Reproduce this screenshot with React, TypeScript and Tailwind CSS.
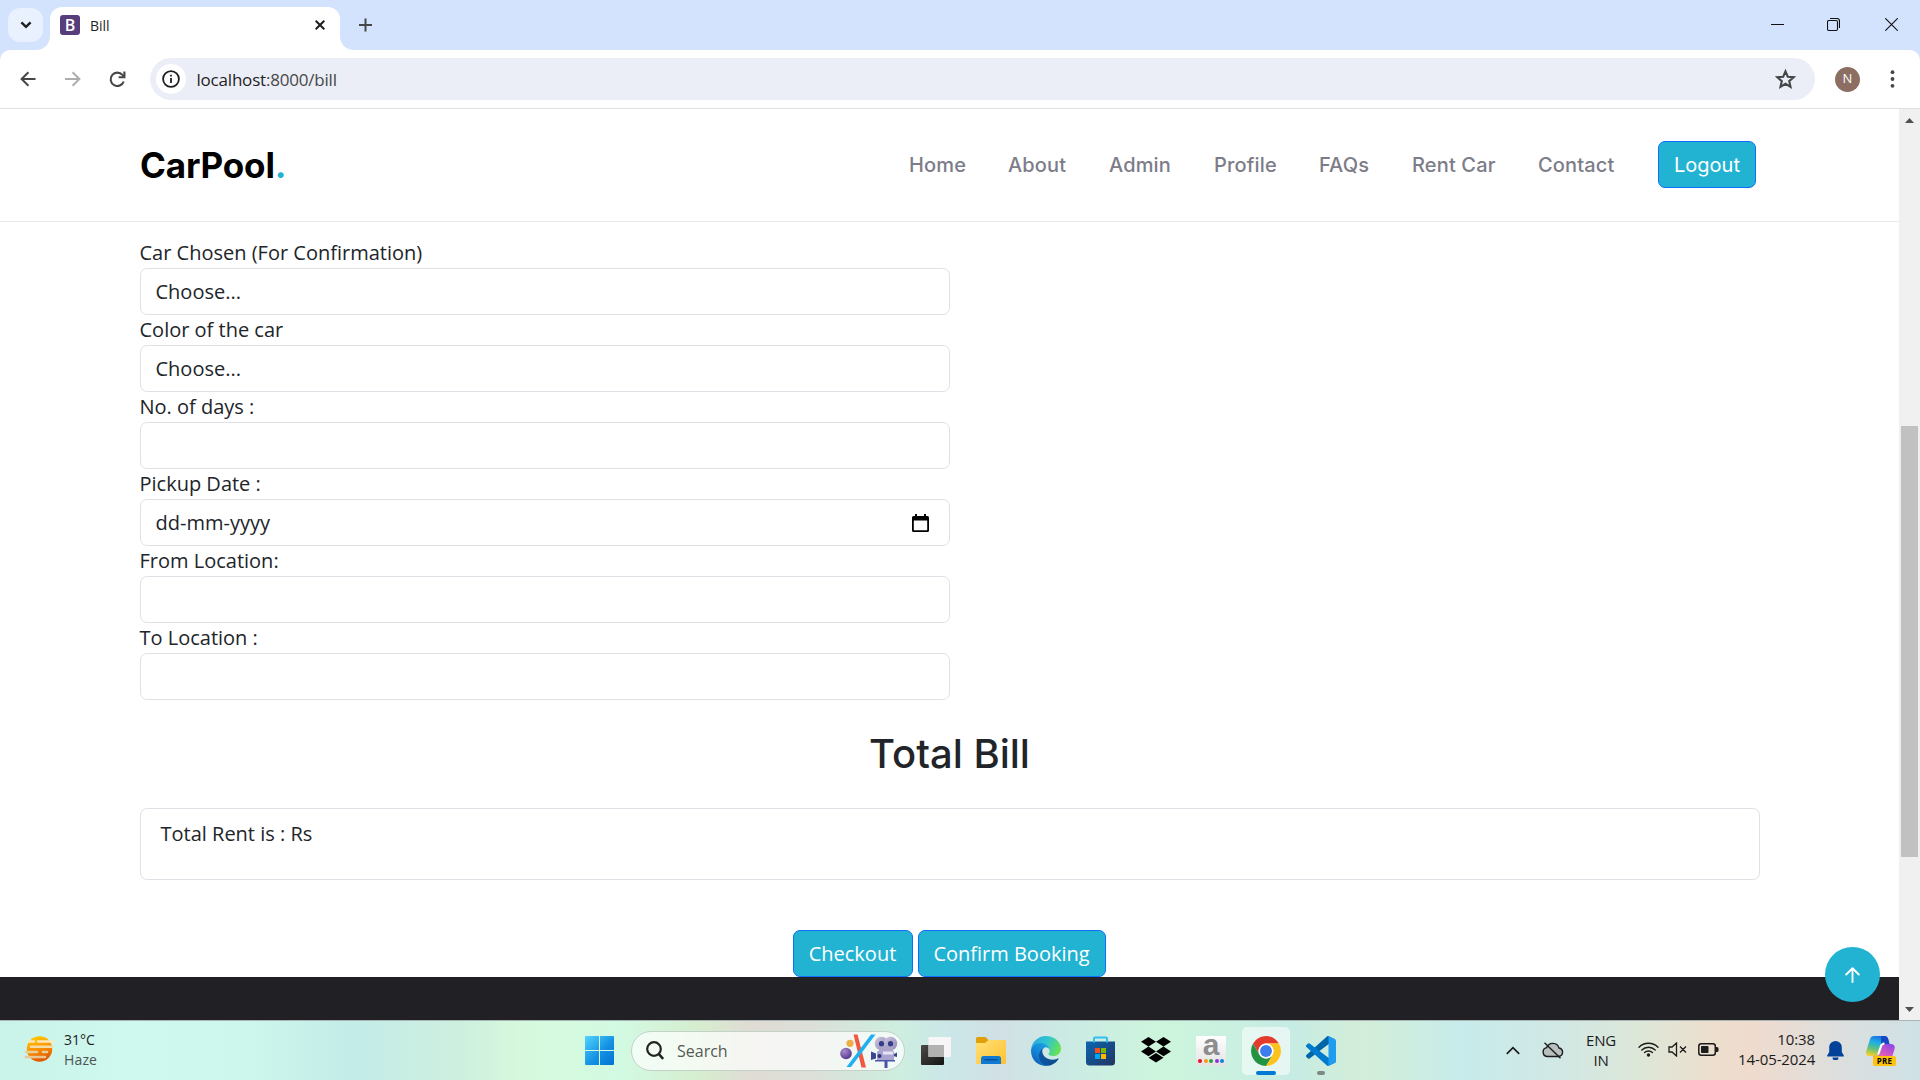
import React from "react";

const NAV: { label: string; width: string }[] = [
  { label: "Home", width: "w-[56px]" },
  { label: "About", width: "w-[58px]" },
  { label: "Admin", width: "w-[62px]" },
  { label: "Profile", width: "w-[62px]" },
  { label: "FAQs", width: "w-[50px]" },
  { label: "Rent Car", width: "w-[83px]" },
  { label: "Contact", width: "w-[77px]" },
];

const FIELDS: { label: string; value?: string; date?: boolean }[] = [
  { label: "Car Chosen (For Confirmation)", value: "Choose..." },
  { label: "Color of the car", value: "Choose..." },
  { label: "No. of days :" },
  { label: "Pickup Date :", value: "dd-mm-yyyy", date: true },
  { label: "From Location:" },
  { label: "To Location :" },
];

function TitleBar() {
  return (
    <div className="flex h-[50px] shrink-0 bg-[#d3e3fd] pl-2">
      <div className="mt-2 flex h-[34px] w-[35px] items-center justify-center rounded-[12px] bg-[#e9f0fe]">
        <svg width="12" height="8" viewBox="0 0 12 8" fill="none" stroke="#1f1f1f" strokeWidth="2.4">
          <path d="M1.4 1.3 6 5.9l4.6-4.6" />
        </svg>
      </div>
      <div className="relative ml-[7px] mt-[7px] flex h-[43px] w-[290px] items-center rounded-t-[12px] bg-white pb-[7px] pl-[10px] pr-[15px]">
        <svg className="absolute -left-[14px] bottom-0" width="14" height="14">
          <path d="M14 0v14H0C8 14 14 8 14 0z" fill="#fff" />
        </svg>
        <svg className="absolute -right-[14px] bottom-0" width="14" height="14">
          <path d="M0 0v14h14C6 14 0 8 0 0z" fill="#fff" />
        </svg>
        <div className="flex h-5 w-5 items-center justify-center rounded-[3px] bg-[#563d7c] text-[16px] font-semibold leading-none text-white">
          B
        </div>
        <span className="ml-[10px] mt-[1px] text-[14px] text-[#1f1f1f]">Bill</span>
        <svg className="ml-auto" width="10" height="10" viewBox="0 0 10 10" stroke="#1f1f1f" strokeWidth="2">
          <path d="M.7.7l8.600 8.600M9.300.7.7 9.300" />
        </svg>
      </div>
      <svg className="ml-[19px] mt-[18px]" width="13" height="14" viewBox="0 0 13 14" stroke="#444746" strokeWidth="2">
        <path d="M6.500 .5v13M0 7h13" />
      </svg>
      <div className="ml-auto flex items-start pr-[22px] pt-[18px]">
        <svg width="13" height="13" stroke="#111" strokeWidth="1">
          <path d="M0 6.500h13" />
        </svg>
        <svg className="ml-[43px]" width="13" height="13" viewBox="0 0 13 13" fill="none" stroke="#111" strokeWidth="1.100">
          <rect x=".5" y="2.500" width="10" height="10" rx="1.500" />
          <path d="M3 .5h7a2.500 2.500 0 0 1 2.500 2.500v7" />
        </svg>
        <svg className="ml-[45px]" width="13" height="13" viewBox="0 0 13 13" stroke="#111" strokeWidth="1.100">
          <path d="M.3.3l12.400 12.400M12.700.3.3 12.700" />
        </svg>
      </div>
    </div>
  );
}

function Toolbar() {
  return (
    <div className="bg-[#d3e3fd]">
      <div className="flex h-[59px] items-center rounded-t-[10px] border-b border-[#dfdfdf] bg-white pl-5">
        <svg width="16" height="16" viewBox="0 0 16 16" fill="none" stroke="#444746" strokeWidth="2">
          <path d="M15.500 8H2M8.400 1.200 1.600 8l6.800 6.800" />
        </svg>
        <svg className="ml-[29px]" width="16" height="16" viewBox="0 0 16 16" fill="none" stroke="#adadad" strokeWidth="2">
          <path d="M0 8h13.500M7.600 1.200 14.400 8l-6.800 6.800" />
        </svg>
        <svg className="ml-[28px]" width="17" height="17" viewBox="0 0 17 17" fill="none" stroke="#444746" strokeWidth="2.100">
          <path d="M14.700 10.500A6.700 6.700 0 1 1 13.400 3.900L15 5.500" />
          <path d="M15.400 .5v5.700H9.600" />
        </svg>
        <div className="ml-[24px] flex h-[42px] w-[1665px] items-center rounded-full bg-[#ebeef7] pl-[6px] pr-[19px]">
          <div className="flex h-[30px] w-[30px] items-center justify-center rounded-full bg-white">
            <svg width="18" height="18" viewBox="0 0 18 18" fill="none" stroke="#1f1f1f" strokeWidth="1.800">
              <circle cx="9" cy="9" r="7.900" />
              <path d="M9 8v5M9 4.700v1.900" />
            </svg>
          </div>
          <span className="ml-[10.500px] text-[17px] leading-none tracking-[-0.2px] text-[#1f1f1f]">
            localhost<span className="text-[#474747]">:8000/bill</span>
          </span>
          <svg className="ml-auto" width="21" height="20" viewBox="0 0 21 20" fill="none" stroke="#444746" strokeWidth="2.100">
            <path d="M10.500 2.300l2.300 5.400 5.800.5-4.400 3.900 1.300 5.700-5-3-5 3 1.300-5.700L2.400 8.200l5.800-.5z" />
          </svg>
        </div>
        <div className="ml-5 flex h-[25px] w-[25px] items-center justify-center rounded-full bg-[#8d6e63] text-[13px] text-white">
          N
        </div>
        <svg className="ml-[30px]" width="5" height="18" fill="#444746">
          <circle cx="2.500" cy="2.200" r="1.900" />
          <circle cx="2.500" cy="9" r="1.900" />
          <circle cx="2.500" cy="15.800" r="1.900" />
        </svg>
      </div>
    </div>
  );
}

function SiteHeader() {
  return (
    <header className="flex h-[113px] shrink-0 items-center border-b border-[#ebebee] pl-[140px] pr-[143px] font-['Inter'] text-[20px]">
      <div className="text-[35px] font-bold leading-none tracking-[-0.15px] text-black">
        CarPool<span className="text-[#22b3d2]">.</span>
      </div>
      <nav className="-mt-[2px] ml-auto flex items-center gap-[43px] font-medium text-[#7d7c89]">
        {NAV.map((n) => (
          <a key={n.label} className={`${n.width} mt-px whitespace-nowrap tracking-[0.15px]`}>
            {n.label}
          </a>
        ))}
        <button className="h-[47px] w-[98px] rounded-[7px] border border-[#0d6efd] bg-[#22b3d2] pt-[2px] font-normal text-white">
          Logout
        </button>
      </nav>
    </header>
  );
}

function CalendarIcon() {
  return (
    <svg className="mt-[1px]" width="17" height="19" viewBox="0 0 17 19">
      <path
        fillRule="evenodd"
        d="M3 0h2v2h7V0h2v2h1.500A1.500 1.500 0 0 1 17 3.500v13a1.500 1.500 0 0 1-1.500 1.500h-14A1.500 1.500 0 0 1 0 16.500v-13A1.500 1.500 0 0 1 1.500 2H3zM1.800 6.500v9.700h13.400V6.500z"
        fill="#000"
      />
    </svg>
  );
}

function Scrollbar() {
  return (
    <div className="flex w-[21px] flex-col items-center bg-[#f0f0f0]">
      <svg className="mt-[9px]" width="9" height="5">
        <path d="M4.500 0 9 5H0z" fill="#505050" />
      </svg>
      <div className="mt-[303px] h-[431px] w-[17px] bg-[#c1c1c1]" />
      <svg className="mt-[150px]" width="9" height="5">
        <path d="M4.500 5 9 0H0z" fill="#505050" />
      </svg>
    </div>
  );
}

function Page() {
  return (
    <div className="relative flex h-[911px] shrink-0 bg-white">
      <div className="flex min-w-0 flex-1 flex-col text-[20px] text-[#212529]">
        <SiteHeader />
        <main className="flex h-[755px] flex-col pl-[140px] pr-[139px] pt-4">
          <form className="w-[810px]">
            {FIELDS.map((f) => (
              <div key={f.label}>
                <label className="-ml-[0.5px] block h-[30px] leading-[30px]">{f.label}</label>
                <div className="flex h-[47px] items-center justify-between rounded-[7px] border border-[#dee2e6] pl-[14.500px] pr-5">
                  <span>{f.value}</span>
                  {f.date && <CalendarIcon />}
                </div>
              </div>
            ))}
          </form>
          <h2 className="mt-[30px] h-12 pr-px text-center font-['Inter'] text-[40px] font-medium leading-[48px]">Total Bill</h2>
          <section className="mt-[30px] h-[72px] rounded-[7px] border border-[#dee2e6] pl-[19.500px] pt-[10px] leading-[30px]">
            Total Rent is : Rs
          </section>
          <div className="mt-[50px] flex justify-center gap-[5px] pr-[2px] text-white">
            <button className="h-[47px] w-[120px] rounded-[7px] border border-[#0d6efd] bg-[#22b3d2]">Checkout</button>
            <button className="h-[47px] w-[188px] rounded-[7px] border border-[#0d6efd] bg-[#22b3d2]">
              Confirm Booking
            </button>
          </div>
        </main>
        <footer className="h-[43px] bg-[#212025]" />
      </div>
      <Scrollbar />
      <div className="absolute bottom-[18px] right-10 flex h-[55px] w-[55px] items-center justify-center rounded-full bg-[#22b3d2]">
        <svg className="mt-[1px]" width="15" height="16" viewBox="0 0 15 16" fill="none" stroke="#fff" strokeWidth="1.900" strokeLinecap="round" strokeLinejoin="round">
          <path d="M7.500 15V1.500M1.200 7.500l6.300-6.200 6.300 6.200" />
        </svg>
      </div>
    </div>
  );
}

function HazeIcon() {
  return (
    <svg className="-ml-px -mt-[2px]" width="31" height="28" viewBox="0 0 31 28">
      <defs>
        <linearGradient id="sun" x1="0" y1="0" x2=".3" y2="1">
          <stop offset="0" stopColor="#ffd400" />
          <stop offset=".5" stopColor="#ff9a00" />
          <stop offset="1" stopColor="#e25a00" />
        </linearGradient>
      </defs>
      <circle cx="15.500" cy="13" r="12.700" fill="url(#sun)" />
      <g strokeLinecap="round" strokeWidth="2.600">
        <path d="M5 5.500h5M14 5.500h15" stroke="#fbe9bd" />
        <path d="M7 10.800h21" stroke="#f4dca8" />
        <path d="M2 16h11M19 16h4" stroke="#e8cf9a" />
        <path d="M2 21h19" stroke="#e9c795" />
      </g>
    </svg>
  );
}

function WindowsIcon() {
  return (
    <svg width="29" height="29" viewBox="0 0 29 29">
      <defs>
        <linearGradient id="win" x1="0" y1="0" x2="1" y2="1">
          <stop offset="0" stopColor="#52d5ff" />
          <stop offset=".55" stopColor="#1592e3" />
          <stop offset="1" stopColor="#0072d3" />
        </linearGradient>
      </defs>
      <path
        fill="url(#win)"
        d="M1 0h13v14H0V1a1 1 0 0 1 1-1zM15 0h13a1 1 0 0 1 1 1v13H15zM0 15h14v14H1a1 1 0 0 1-1-1zM15 15h14v13a1 1 0 0 1-1 1H15z"
      />
    </svg>
  );
}

function SearchArt() {
  return (
    <svg width="58" height="34" viewBox="0 0 58 34">
      <defs>
        <radialGradient id="ball" cx=".35" cy=".3" r=".8">
          <stop offset="0" stopColor="#a98bd0" />
          <stop offset="1" stopColor="#4d2f86" />
        </radialGradient>
        <linearGradient id="cam" x1="0" y1="0" x2="1" y2="1">
          <stop offset="0" stopColor="#cfc6da" />
          <stop offset="1" stopColor="#8f88bd" />
        </linearGradient>
      </defs>
      <circle cx="6" cy="19.500" r="5.800" fill="url(#ball)" />
      <circle cx="10" cy="9.300" r="3.600" fill="#f0ad45" />
      <path d="M13.500.5h4L26 33.500h-4.500z" fill="#f0583f" />
      <path d="M31 .5h4.500L11 33H6.500z" fill="#1fb0f2" />
      <path d="M31 17.500l5 2v5l-5 1.500z" fill="#3d458f" />
      <path d="M53 20.500l4-2v4.500l-4-1z" fill="#3d458f" />
      <circle cx="41.500" cy="9.500" r="6.800" fill="url(#cam)" />
      <circle cx="50.500" cy="9.500" r="6.800" fill="url(#cam)" />
      <path d="M39 12h14v5H39z" fill="#aba3c8" />
      <circle cx="41.500" cy="9.700" r="2.600" fill="#343d87" />
      <circle cx="50.500" cy="9.700" r="2.600" fill="#343d87" />
      <rect x="37" y="17" width="17" height="9.500" rx="1" fill="#a9a3d0" />
      <path d="M35 26h20v1.500H35zM44.500 27.500h3V34h-3z" fill="#4a55a8" />
      <circle cx="39.500" cy="22" r="2" fill="#2b3275" />
      <path d="M43 17.500h10v3H43z" fill="#e6e3f4" />
    </svg>
  );
}

function TaskViewIcon() {
  return (
    <svg width="30" height="28" viewBox="0 0 30 28">
      <defs>
        <linearGradient id="tv" x1="0" y1="0" x2="1" y2="1">
          <stop offset="0" stopColor="#4a4a48" />
          <stop offset="1" stopColor="#141414" />
        </linearGradient>
      </defs>
      <rect x="0" y="8" width="23" height="20" rx="1" fill="url(#tv)" />
      <rect x="7.500" y="0" width="22.500" height="20" rx="1" fill="#f6f6f6" />
      <rect x="7.500" y="8" width="15.500" height="12" fill="#b2b2b0" />
    </svg>
  );
}

function FolderIcon() {
  return (
    <svg width="30" height="27" viewBox="0 0 30 27">
      <defs>
        <linearGradient id="fold" x1="0" y1="0" x2="1" y2="1">
          <stop offset="0" stopColor="#ffe07a" />
          <stop offset="1" stopColor="#ffc12e" />
        </linearGradient>
      </defs>
      <path d="M0 1.500A1.500 1.500 0 0 1 1.500 0h8l3 3H28a2 2 0 0 1 2 2v4H0z" fill="#dfa00c" />
      <path d="M0 6h9l3.500-3H29a1 1 0 0 1 1 1v22a1 1 0 0 1-1 1H1a1 1 0 0 1-1-1z" fill="url(#fold)" />
      <path d="M5 27v-5.500A2.500 2.500 0 0 1 7.500 19h15a2.500 2.500 0 0 1 2.500 2.500V27z" fill="#1079d2" />
      <path d="M9 22.800h12" stroke="#0b4f96" strokeWidth="1.500" strokeLinecap="round" />
    </svg>
  );
}

function EdgeIcon() {
  return (
    <svg width="30" height="30" viewBox="0 0 256 256">
      <defs>
        <linearGradient id="e1" x1="0" y1=".5" x2="1" y2=".6">
          <stop offset="0" stopColor="#0c59a4" />
          <stop offset="1" stopColor="#114a8b" />
        </linearGradient>
        <linearGradient id="e2" x1=".8" y1=".2" x2=".3" y2="1">
          <stop offset="0" stopColor="#1b9de2" />
          <stop offset=".5" stopColor="#1284d4" />
          <stop offset="1" stopColor="#0d5fb5" />
        </linearGradient>
        <linearGradient id="e3" x1="0" y1=".3" x2="1" y2=".6">
          <stop offset="0" stopColor="#2aa9e0" />
          <stop offset=".5" stopColor="#30c6ce" />
          <stop offset="1" stopColor="#6ce34d" />
        </linearGradient>
      </defs>
      <path
        fill="url(#e1)"
        d="M231 190.500a94 94 0 0 1-10.500 4.700 102 102 0 0 1-36 6.500c-47.400 0-88.700-32.600-88.700-74.500a31.600 31.600 0 0 1 16.400-27.300c-42.900 1.800-53.900 46.500-53.900 72.700 0 74 68.200 81.500 82.900 81.500 7.900 0 19.800-2.300 27-4.600l1.300-.4A128.300 128.300 0 0 0 236 194a4 4 0 0 0-5-3.500z"
      />
      <path
        fill="url(#e2)"
        d="M105.700 241.400a79 79 0 0 1-22.700-21.300 80.700 80.700 0 0 1 29.500-120c3.200-1.500 8.500-4.100 15.600-4a32.400 32.400 0 0 1 25.700 13 31.900 31.900 0 0 1 6.300 18.700c0-.2 24.500-79.600-80-79.600-43.900 0-80 41.700-80 78.200a130.200 130.200 0 0 0 12.100 56 128 128 0 0 0 156.400 67 75.500 75.500 0 0 1-62.800-8z"
      />
      <path
        fill="url(#e3)"
        d="M152.300 148.900c-.8 1-3.300 2.500-3.300 5.700 0 2.600 1.700 5.100 4.700 7.200 14.400 10 41.500 8.700 41.600 8.700a59.600 59.600 0 0 0 30.300-8.400 61.400 61.400 0 0 0 30.400-52.900c.3-22.400-8-37.300-11.300-43.900C223.500 23.900 177.700 0 128 0A128 128 0 0 0 0 126.200c.5-36.500 36.800-66 80-66 3.500 0 23.500.3 42 10a72.600 72.600 0 0 1 30.900 29.300c6.100 10.600 7.200 24.100 7.200 29.500s-2.700 13.300-7.800 19.900z"
      />
    </svg>
  );
}

function StoreIcon() {
  return (
    <svg width="30" height="30" viewBox="0 0 30 30">
      <defs>
        <linearGradient id="store" x1="0" y1="0" x2="1" y2="1">
          <stop offset="0" stopColor="#0a66b4" />
          <stop offset="1" stopColor="#22345e" />
        </linearGradient>
      </defs>
      <path d="M0 5.500h29V26a3.500 3.500 0 0 1-3.500 3.500h-22A3.500 3.500 0 0 1 0 26z" fill="url(#store)" />
      <path d="M8 6.500V2.500A1 1 0 0 1 9 1.500h11a1 1 0 0 1 1 1v4" fill="none" stroke="#32bdf1" strokeWidth="2" />
      <path d="M9 12h5v5H9z" fill="#f25022" />
      <path d="M15 12h5v5h-5z" fill="#7fba00" />
      <path d="M9 18h5v5H9z" fill="#00a4ef" />
      <path d="M15 18h5v5h-5z" fill="#ffb900" />
    </svg>
  );
}

function DropboxIcon() {
  return (
    <svg width="30" height="26" viewBox="0 0 30 26">
      <path d="M7.500 0 15 4.800 7.500 9.600 0 4.800zM22.500 0 30 4.800l-7.500 4.800L15 4.800zM0 14.400l7.500-4.800 7.500 4.800-7.500 4.800zM22.500 9.600l7.500 4.800-7.500 4.800-7.500-4.800zM7.500 20.800 15 16l7.500 4.800-7.500 4.800z" />
    </svg>
  );
}

function AmazonIcon() {
  return (
    <div className="flex h-[30px] w-[30px] flex-col items-center justify-between bg-gradient-to-b from-white to-[#e2e2e2] pb-[3px]">
      <span className="h-5 font-['Liberation_Sans'] text-[30px] font-bold leading-[17px] text-[#8d8d8d]">a</span>
      <div className="flex gap-[1.500px]">
        <i className="h-1 w-1 rounded-full bg-[#e5102d]" />
        <i className="h-1 w-1 rounded-full bg-[#f59b0b]" />
        <i className="h-1 w-1 rounded-full bg-[#2f9e44]" />
        <i className="h-1 w-1 rounded-full bg-[#8c35d8]" />
        <i className="h-1 w-1 rounded-full bg-[#0b84dc]" />
      </div>
    </div>
  );
}

function ChromeIcon() {
  return (
    <svg width="30" height="30" viewBox="0 0 48 48">
      <circle cx="24" cy="24" r="24" fill="#fff" />
      <path d="M3.220 12a24 24 0 0 1 41.560 0H24a12 12 0 0 0-10.390 18z" fill="#e33b2e" />
      <path d="M44.780 12A24 24 0 0 1 24 48l10.390-18A12 12 0 0 0 24 12z" fill="#fcc31e" />
      <path d="M24 48A24 24 0 0 1 3.220 12l10.390 18A12 12 0 0 0 34.390 30z" fill="#229342" />
      <circle cx="24" cy="24" r="12" fill="#fff" />
      <circle cx="24" cy="24" r="9.500" fill="#3b7ded" />
    </svg>
  );
}

function VsCodeIcon() {
  return (
    <svg width="30" height="30" viewBox="0 0 100 100">
      <path d="M96.500 10.800 75.900.9a6.200 6.200 0 0 0-7.100 1.200L1.300 63.600a4.200 4.200 0 0 0 0 6.200l5.500 5a4.200 4.200 0 0 0 5.300.2l81.200-61.600c2.700-2 6.700-.1 6.700 3.300v-.2a6.200 6.200 0 0 0-3.500-5.700z" fill="#0065a9" />
      <path d="M96.500 89.200 75.900 99.100a6.200 6.200 0 0 1-7.100-1.200L1.300 36.400a4.200 4.200 0 0 1 0-6.200l5.500-5a4.200 4.200 0 0 1 5.300-.2l81.200 61.600c2.700 2 6.700.1 6.700-3.300v.2a6.200 6.200 0 0 1-3.500 5.700z" fill="#007acc" />
      <path d="M75.900 99.100a6.200 6.200 0 0 1-7.100-1.200c2.300 2.300 6.200.7 6.200-2.600V4.700c0-3.300-3.900-4.900-6.200-2.600A6.200 6.200 0 0 1 75.900.9l20.600 9.900a6.200 6.200 0 0 1 3.500 5.700v67a6.200 6.200 0 0 1-3.500 5.700z" fill="#1f9cf0" />
    </svg>
  );
}

function CopilotIcon() {
  return (
    <div className="relative h-[29px] w-[30px]">
      <svg width="29" height="27" viewBox="0 0 29 27">
        <defs>
          <linearGradient id="c1" x1=".6" y1="0" x2=".3" y2="1">
            <stop offset="0" stopColor="#1b6fe0" />
            <stop offset=".35" stopColor="#1cb0e6" />
            <stop offset=".65" stopColor="#5cc080" />
            <stop offset="1" stopColor="#f3cf2c" />
          </linearGradient>
          <linearGradient id="c2" x1=".8" y1="0" x2=".2" y2="1">
            <stop offset="0" stopColor="#8f49e6" />
            <stop offset=".5" stopColor="#d658c0" />
            <stop offset="1" stopColor="#f58a5a" />
          </linearGradient>
        </defs>
        <path d="M8 0h10.500c2.200 0 3.200 1.400 3.800 3.500L23.500 8H19c-3 0-4 1.500-4.800 4l-2 6c-.5 1.500-1.200 2-2.700 2H3c-2.500 0-3.500-2-2.700-5L4 3.200C4.700 1 6 0 8 0z" fill="url(#c1)" />
        <path d="M15 0h3.500c2.200 0 3.200 1.400 3.800 3.500L23.500 8H19c-2 0-3 .6-3.800 2z" fill="#1747c4" />
        <path d="M18.500 8H25c3 0 4.300 2 3.500 5l-3 10c-.7 2.200-2 3.500-4 3.500H11c-2 0-3-1-3.500-3L7 20h2.500c3 0 4-1.200 4.800-4l2-6c.4-1.300 1-2 2.200-2z" fill="url(#c2)" />
        <path d="M18.500 7.500c-2.500 0-3.500 1.500-4.200 4L12 18.500" fill="none" stroke="#fff" strokeWidth="1.800" />
      </svg>
      <span className="absolute -bottom-[1px] left-[7px] flex h-[10px] w-[23px] items-center justify-center rounded-[2px] bg-[#fdc30a] text-[8px] font-bold leading-none tracking-[0.3px] text-black">
        PRE
      </span>
    </div>
  );
}

function Taskbar() {
  return (
    <div className="flex h-[60px] shrink-0 items-center border-t border-[#a9b5b3] bg-[linear-gradient(90deg,#c9f2e8_0px,#cff8ee_130px,#cdf6ec_250px,#c3ece9_350px,#cdefdf_460px,#d6f9dc_520px,#d2fae2_620px,#d6edcf_700px,#dfdcd4_750px,#dcdfd8_810px,#cdeee0_900px,#cbe6e8_950px,#d1e0e5_1000px,#cbebe4_1070px,#cdf5dc_1160px,#c6ece4_1290px,#d3eed8_1360px,#c7eceb_1460px,#d0e8e6_1550px,#dde7d8_1640px,#ecdfce_1710px,#f0dbce_1750px,#dadfdf_1850px,#cfe1e5_1920px)] text-[15px] text-[#1c1c1c]">
      <div className="flex w-[585px] items-center pl-[25px]">
        <HazeIcon />
        <div className="-mt-[1px] ml-[9px] text-[14px] leading-[20px]">
          <div>31°C</div>
          <div className="tracking-[0.15px] text-[#4c5553]">Haze</div>
        </div>
      </div>
      <WindowsIcon />
      <div className="ml-[17px] flex h-[40px] w-[274px] items-center rounded-full border border-[#c3d2c8] bg-white/70 pl-[14px] pr-[6px]">
        <svg width="18" height="19" viewBox="0 0 18 19" fill="none" stroke="#222" strokeWidth="2.200">
          <circle cx="8" cy="8" r="6.800" />
          <path d="M12.500 12.700 17.200 18" strokeWidth="2.600" />
        </svg>
        <span className="ml-[13px] text-[16px] text-[#555a57]">Search</span>
        <div className="ml-auto">
          <SearchArt />
        </div>
      </div>
      <div className="ml-4 flex items-center">
        <TaskViewIcon />
        <div className="ml-[25px]">
          <FolderIcon />
        </div>
        <div className="ml-[25px]">
          <EdgeIcon />
        </div>
        <div className="ml-[25px]">
          <StoreIcon />
        </div>
        <div className="-mt-[1px] ml-[25px]">
          <DropboxIcon />
        </div>
        <div className="ml-[25px]">
          <AmazonIcon />
        </div>
        <div className="relative ml-4 flex h-12 w-12 items-center justify-center rounded-[5px] bg-white/55">
          <ChromeIcon />
          <i className="absolute bottom-0 left-[14px] h-1 w-5 rounded-full bg-[#0078d4]" />
        </div>
        <div className="relative ml-4 flex h-12 items-center">
          <VsCodeIcon />
          <i className="absolute bottom-0 left-[11px] h-1 w-2 rounded-full bg-[#7b8a84]" />
        </div>
      </div>
      <div className="ml-auto flex items-center pr-[24px]">
        <svg className="-mt-[1px]" width="14" height="9" viewBox="0 0 14 9" fill="none" stroke="#1c1c1c" strokeWidth="1.700">
          <path d="M.8 7.800 7 1.600l6.200 6.200" />
        </svg>
        <svg className="-mt-[1px] ml-[22px]" width="22" height="17" viewBox="0 0 22 17" fill="#b9bfbd" stroke="#1c1c1c" strokeWidth="1.400">
          <path d="M5.500 14.500a4.500 4.500 0 0 1-.8-8.900 6.500 6.500 0 0 1 12.300.4 4.300 4.300 0 0 1-.2 8.500z" />
          <path d="M2.500.8l16 15.500" />
        </svg>
        <div className="-mt-[2px] ml-[22px] w-[30px] text-center leading-5 tracking-[-0.2px]">
          <div>ENG</div>
          <div>IN</div>
        </div>
        <svg className="-mt-[2px] ml-[22px]" width="21" height="15" viewBox="0 0 21 15" fill="none" stroke="#1c1c1c" strokeWidth="1.400" strokeLinecap="round">
          <path d="M1 5.200a13.500 13.500 0 0 1 19 0M3.800 8a9.500 9.500 0 0 1 13.400 0M6.600 10.600a5.500 5.500 0 0 1 7.800 0" />
          <circle cx="10.500" cy="13" r="1" fill="#1c1c1c" />
        </svg>
        <svg className="-mt-[2px] ml-[9px]" width="20" height="15" viewBox="0 0 20 15" fill="none" stroke="#1c1c1c" strokeWidth="1.300">
          <path d="M1 5v5h3l4.500 4V1L4 5zM12 4.500l6 6M18 4.500l-6 6" />
        </svg>
        <svg className="-mt-[2px] ml-[10px]" width="21" height="13" viewBox="0 0 21 13">
          <rect x=".8" y=".8" width="16.500" height="11.400" rx="2.500" fill="none" stroke="#1c1c1c" strokeWidth="1.500" />
          <rect x="3" y="3" width="7.500" height="7" rx=".8" fill="#1c1c1c" />
          <path d="M18 4h1a1.500 1.500 0 0 1 1.500 1.500v2A1.500 1.500 0 0 1 19 9h-1z" fill="#1c1c1c" />
        </svg>
        <div className="-mt-[4px] ml-[19px] w-[77px] whitespace-nowrap text-right leading-5 tracking-[-0.1px]">
          <div>10:38</div>
          <div>14-05-2024</div>
        </div>
        <svg className="ml-[12px]" width="17" height="19" viewBox="0 0 17 19" fill="#04429a">
          <path d="M8.500 0a6.300 6.300 0 0 1 6.300 6.300V11l2 3.600c.2.500 0 .9-.6.900H.8c-.6 0-.8-.4-.6-.9l2-3.600V6.300A6.300 6.300 0 0 1 8.500 0zM5.500 16.500h6a3 3 0 0 1-6 0z" />
        </svg>
        <div className="ml-[22px]">
          <CopilotIcon />
        </div>
      </div>
    </div>
  );
}

export default function App() {
  return (
    <div className="flex h-[1080px] w-[1920px] flex-col overflow-hidden bg-white font-['Open_Sans',sans-serif]">
      <TitleBar />
      <Toolbar />
      <Page />
      <Taskbar />
    </div>
  );
}
